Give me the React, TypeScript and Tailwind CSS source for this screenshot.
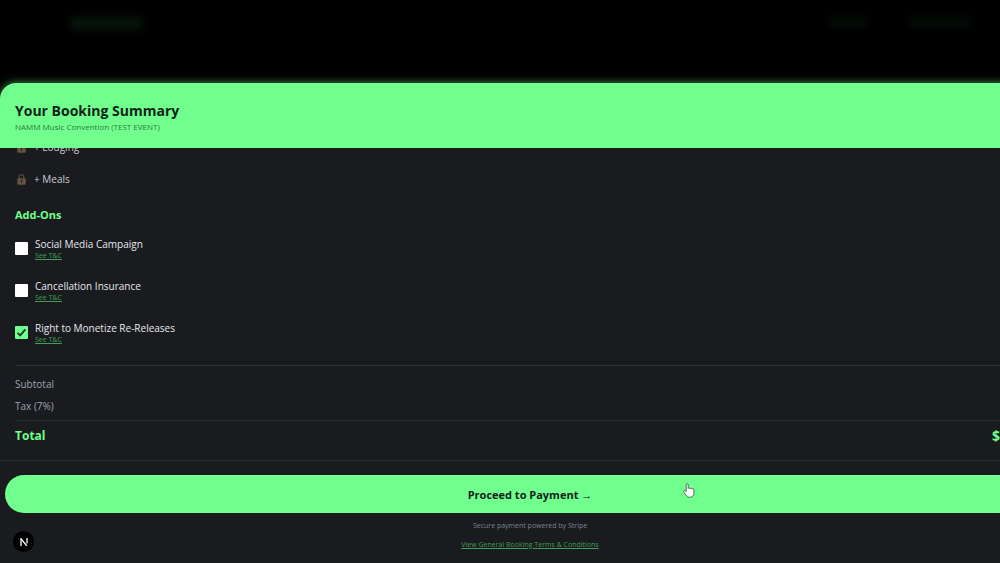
import React, { useState } from 'react';

const packageItems = ['Lodging', 'Meals'];

const addOns = [
  { id: 'social', name: 'Social Media Campaign' },
  { id: 'insurance', name: 'Cancellation Insurance' },
  { id: 'monetize', name: 'Right to Monetize Re-Releases' },
];

function LockIcon() {
  return (
    <svg className="w-[9px] h-[11px] shrink-0" viewBox="0 0 9 11" aria-hidden="true">
      <path d="M2.2 5V3a2.3 2.3 0 0 1 4.6 0v2" fill="none" stroke="#544a42" strokeWidth="1.2" />
      <rect x="0.3" y="4.3" width="8.4" height="6.4" rx="0.8" fill="#665440" />
      <path d="M4.5 6.2v2.4" stroke="#2c2622" strokeWidth="1.3" strokeLinecap="round" />
    </svg>
  );
}

function HandCursor() {
  return (
    <svg className="absolute left-[683px] top-[483px] w-3 h-[15px] pointer-events-none" viewBox="0 0 12 15" aria-hidden="true">
      <path
        d="M3.2 8.6V1.7c0-1.4 2-1.4 2 0v3.7c.3-.8 1.8-.7 1.9.3.4-.7 1.8-.6 1.9.4.5-.6 1.9-.4 1.9.8v3c0 2.6-1.3 4.3-3.6 4.3H6.2c-1.5 0-2.3-.7-3-1.9L.8 9c-.7-1.2.7-2.1 1.5-1.2z"
        fill="#fff"
        stroke="#3a4a3e"
        strokeWidth="0.8"
      />
    </svg>
  );
}

function App() {
  const [selected, setSelected] = useState<{ [id: string]: boolean }>({ monetize: true });

  const toggle = (id: string) => setSelected((prev) => ({ ...prev, [id]: !prev[id] }));

  return (
    <div className="relative h-screen overflow-hidden bg-black flex flex-col font-['Open_Sans','Noto_Sans',sans-serif]">
      {/* Page header, dimmed behind the drawer */}
      <div className="h-[83px] shrink-0 pl-[70px] pr-7 pt-4 flex justify-between items-start" aria-hidden="true">
        <div className="w-[72px] h-[14px] bg-[#06120a] blur-[3px]" />
        <div className="flex gap-10">
          <div className="w-10 h-3 bg-[#030a05] blur-[3px]" />
          <div className="w-16 h-3 bg-[#030a05] blur-[3px]" />
        </div>
      </div>

      {/* Drawer, runs past the right edge */}
      <section className="w-[106%] flex-1 min-h-0 flex flex-col rounded-t-2xl bg-[#1a1b1f] shadow-[0_0_8px_#71ff8d99]">
        <header className="h-[65px] shrink-0 px-[15px] pt-[18px] rounded-t-2xl bg-[#71ff8d] text-[#10231a]">
          <h1 className="text-[14px] leading-5 font-bold">Your Booking Summary</h1>
          <p className="text-[8px] leading-3 text-[#2f7a42]">NAMM Music Convention (TEST EVENT)</p>
        </header>

        <div className="flex-1 min-h-0 overflow-hidden flex flex-col justify-end px-[15px] pb-[14px]">
          <ul className="shrink-0">
            {packageItems.map((item) => (
              <li key={item} className="h-8 pl-0.5 flex items-center gap-2 text-[10px] text-[#c9cdd6]">
                <LockIcon />
                <span>+ {item}</span>
              </li>
            ))}
          </ul>

          <h2 className="shrink-0 mt-[10px] mb-[2px] text-[11px] leading-5 font-bold text-[#71ff8d]">Add-Ons</h2>
          {addOns.map((addOn) => (
            <div key={addOn.id} className="h-[42px] shrink-0 flex items-center gap-[7px]">
              <div className="grid w-[13px] h-[13px]">
                <input
                  id={addOn.id}
                  type="checkbox"
                  checked={!!selected[addOn.id]}
                  onChange={() => toggle(addOn.id)}
                  className="peer col-start-1 row-start-1 appearance-none w-[13px] h-[13px] rounded-[1px] bg-white checked:bg-[#71ff8d]"
                />
                <svg
                  className="col-start-1 row-start-1 w-[13px] h-[13px] pointer-events-none invisible peer-checked:visible"
                  viewBox="0 0 13 13"
                  fill="none"
                  stroke="#1c3d27"
                  strokeWidth="1.9"
                  aria-hidden="true"
                >
                  <path d="M2.600 6.800L5.200 9.400L10.400 3.300" />
                </svg>
              </div>
              <div className="pt-1 flex flex-col items-start">
                <label htmlFor={addOn.id} className="text-[10px] leading-3 text-[#e6e8ee]">{addOn.name}</label>
                <a href="#terms" className="text-[7px] leading-3 text-[#3f9e57] underline">See T&amp;C</a>
              </div>
            </div>
          ))}

          <dl className="shrink-0 mt-3 pt-[7px] border-t border-[#2d2f34] text-[10px] text-[#9ca3af]">
            <dt className="h-[22px] flex items-center">Subtotal</dt>
            <dt className="h-[22px] flex items-center">Tax (7%)</dt>
            <div className="mt-[3px] pt-[5px] border-t border-[#2d2f34] flex justify-between leading-5 font-bold text-[#71ff8d]">
              <dt className="text-[12px]">Total</dt>
              <dd className="w-[53px] text-[14px]">$</dd>
            </div>
          </dl>
        </div>

        <footer className="h-[103px] shrink-0 px-[5px] pt-[14px] border-t border-[#2d2f34] flex flex-col items-center">
          <button className="w-full h-[38px] shrink-0 pt-0.5 rounded-full bg-[#71ff8d] text-[11px] font-bold text-[#10231a]">
            Proceed to Payment →
          </button>
          <p className="mt-[7px] text-[7px] leading-3 text-[#7b8290]">Secure payment powered by Stripe</p>
          <a href="#booking-terms" className="mt-[7px] text-[7px] leading-3 text-[#3f9e57] underline">
            View General Booking Terms &amp; Conditions
          </a>
        </footer>
      </section>

      <button
        aria-label="Open dev tools"
        className="absolute left-[13px] bottom-[11px] w-[21px] h-[21px] rounded-full bg-black flex items-center justify-center"
      >
        <svg className="w-2 h-2" viewBox="0 0 8 8" fill="none" stroke="#fff" strokeWidth="1.3" aria-hidden="true">
          <path d="M1 8V.6L6.800 8M7 0v5.500" />
        </svg>
      </button>
      <HandCursor />
    </div>
  );
}

export default App;
